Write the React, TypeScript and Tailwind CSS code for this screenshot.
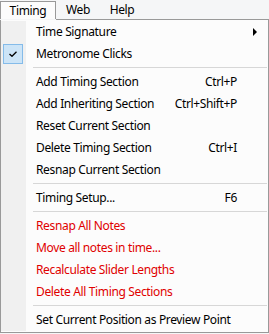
import React from 'react';

type Item =
  | { kind: 'sep' }
  | { kind: 'item'; label: string; shortcut?: string; red?: boolean; checked?: boolean; submenu?: boolean };

const items: Item[] = [
  { kind: 'item', label: 'Time Signature', submenu: true },
  { kind: 'item', label: 'Metronome Clicks', checked: true },
  { kind: 'sep' },
  { kind: 'item', label: 'Add Timing Section', shortcut: 'Ctrl+P' },
  { kind: 'item', label: 'Add Inheriting Section', shortcut: 'Ctrl+Shift+P' },
  { kind: 'item', label: 'Reset Current Section' },
  { kind: 'item', label: 'Delete Timing Section', shortcut: 'Ctrl+I' },
  { kind: 'item', label: 'Resnap Current Section' },
  { kind: 'sep' },
  { kind: 'item', label: 'Timing Setup...', shortcut: 'F6' },
  { kind: 'sep' },
  { kind: 'item', label: 'Resnap All Notes', red: true },
  { kind: 'item', label: 'Move all notes in time...', red: true },
  { kind: 'item', label: 'Recalculate Slider Lengths', red: true },
  { kind: 'item', label: 'Delete All Timing Sections', red: true },
  { kind: 'sep' },
  { kind: 'item', label: 'Set Current Position as Preview Point' },
];

const CheckBox: React.FC = () => (
  <div className="w-[20px] h-[20px] border border-[#84bbe9] bg-[#cce4f7] flex items-center justify-center">
    <svg width="8" height="6" viewBox="0 0 8 6">
      <path d="M0.5 3 L3 5.3 L7.5 0.7" fill="none" stroke="#000" strokeWidth="1.3" />
    </svg>
  </div>
);

const MenuRow: React.FC<{ item: Item }> = ({ item }) => {
  if (item.kind === 'sep') {
    return (
      <div className="h-[6px] flex">
        <div className="w-[25px] bg-[#f0f0f0]" />
        <div className="flex-1 pl-[7px] pr-[1px]">
          <div className="mt-[2px] h-px bg-[#d7d7d7]" />
        </div>
      </div>
    );
  }
  return (
    <div className="h-[22px] flex items-center">
      <div className="w-[25px] h-full bg-[#f0f0f0] flex items-center pl-[2px]">
        {item.checked && <CheckBox />}
      </div>
      <div className={`flex-1 flex items-center pl-[10px] ${item.red ? 'text-[#e00000]' : 'text-black'}`}>
        <span className="flex-1 whitespace-nowrap">{item.label}</span>
        {item.shortcut && <span className="whitespace-nowrap text-black mr-[31px]">{item.shortcut}</span>}
        {item.submenu && (
          <svg width="4" height="8" viewBox="0 0 4 8" className="mr-[11px]">
            <polygon points="0,0 4,4 0,8" fill="#000" />
          </svg>
        )}
      </div>
    </div>
  );
};

const App: React.FC = () => {
  return (
    <div
      className="w-[269px] h-[334px] bg-[#f5f6f7] text-[12px] leading-none tracking-[-0.35px] overflow-hidden"
      style={{ fontFamily: '"Noto Sans", "Segoe UI", sans-serif' }}
    >
      <div className="h-[19px] flex items-end">
        <div className="w-[56px] h-[18px] border-l border-t border-r border-[#999999] bg-[#fcfcfc] flex items-center justify-center">
          Timing
        </div>
        <div className="w-[44px] h-[18px] flex items-center justify-center">Web</div>
        <div className="w-[44px] h-[18px] flex items-center justify-center">Help</div>
      </div>
      <div className="flex">
        <div className="w-[56px] h-px" />
        <div className="flex-1 h-px bg-[#999999]" />
      </div>
      <div className="w-[269px] border-l border-r border-b border-[#999999] bg-[#fcfcfc] py-px">
        {items.map((item, i) => (
          <MenuRow key={i} item={item} />
        ))}
      </div>
    </div>
  );
};

export default App;
